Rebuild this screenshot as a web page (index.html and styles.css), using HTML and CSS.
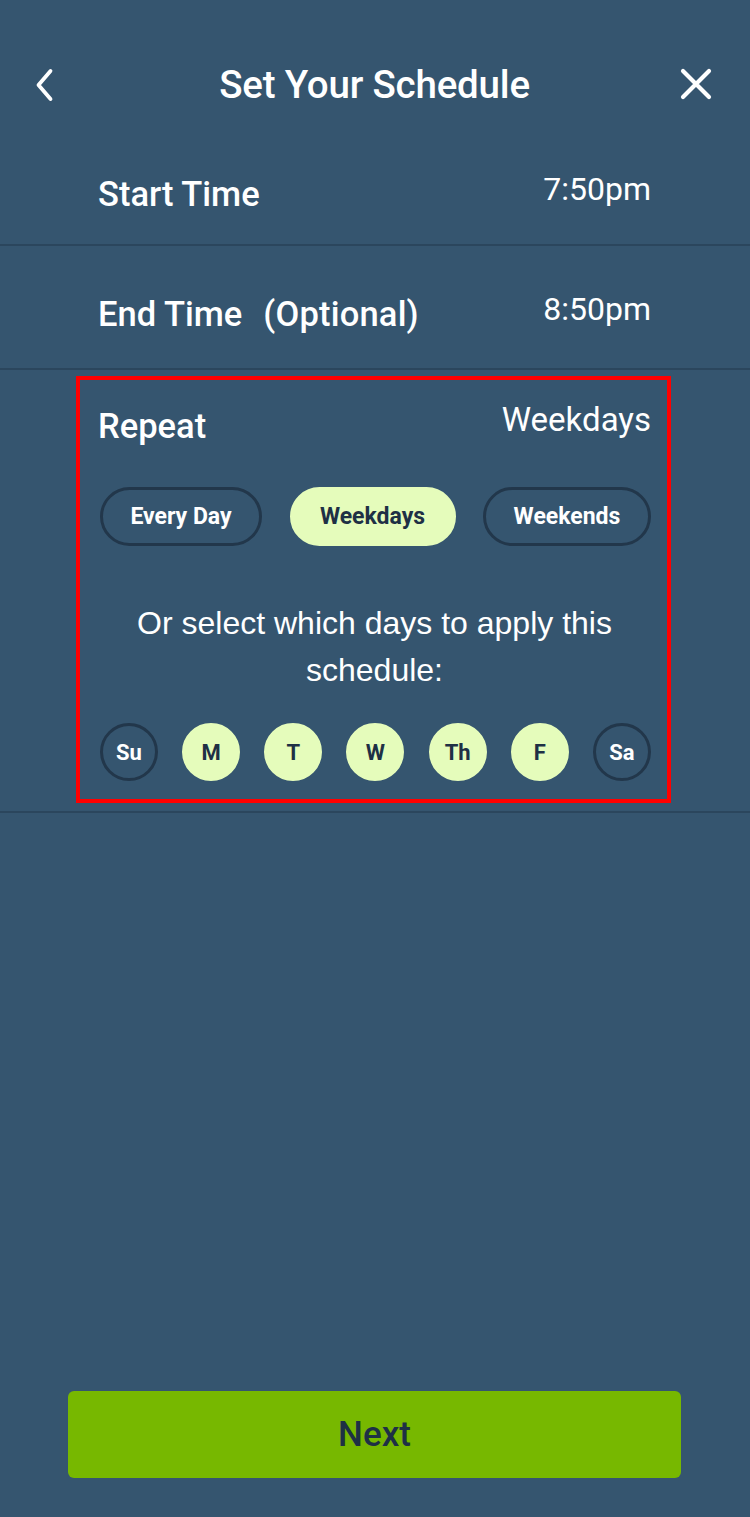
FILE: index.html
```html
<!DOCTYPE html>
<html>
<head>
<meta charset="utf-8">
<link rel="stylesheet" href="styles.css">
</head>
<body>
<div class="screen">
  <header class="topbar">
    <button class="icon-btn back" aria-label="Back">
      <svg width="22" height="34" viewBox="0 0 22 34"><path d="M16.5 3 L4.5 17 L16.5 31" fill="none" stroke="#fff" stroke-width="3.8" stroke-linecap="round" stroke-linejoin="round"/></svg>
    </button>
    <h1 class="title">Set Your Schedule</h1>
    <button class="icon-btn close" aria-label="Close">
      <svg width="34" height="34" viewBox="0 0 34 34"><path d="M4 4 L30 30 M30 4 L4 30" fill="none" stroke="#fff" stroke-width="4.2" stroke-linecap="round"/></svg>
    </button>
  </header>

  <div class="row row-start">
    <span class="label">Start Time</span>
    <span class="value">7:50pm</span>
  </div>
  <div class="row row-end">
    <span class="label">End Time<span class="opt">(Optional)</span></span>
    <span class="value">8:50pm</span>
  </div>

  <section class="repeat">
    <div class="repeat-box">
      <div class="repeat-head">
        <span class="label">Repeat</span>
        <span class="value">Weekdays</span>
      </div>
      <div class="pills">
        <span class="pill">Every Day</span>
        <span class="pill on">Weekdays</span>
        <span class="pill">Weekends</span>
      </div>
      <p class="hint">Or select which days to apply this schedule:</p>
      <div class="days">
        <span class="day">Su</span>
        <span class="day on">M</span>
        <span class="day on">T</span>
        <span class="day on">W</span>
        <span class="day on">Th</span>
        <span class="day on">F</span>
        <span class="day">Sa</span>
      </div>
    </div>
  </section>

  <div class="spacer"></div>

  <footer class="footer">
    <button class="next">Next</button>
  </footer>
</div>
</body>
</html>
```

FILE: styles.css
```css
* { box-sizing: border-box; }
html, body { margin: 0; padding: 0; }
body {
  background: #35556f;
  font-family: Roboto, "Liberation Sans", sans-serif;
  color: #fff;
}
.screen {
  width: 750px;
  height: 1517px;
  display: flex;
  flex-direction: column;
}
.topbar {
  height: 168px;
  display: grid;
  grid-template-columns: 1fr auto 1fr;
  align-items: start;
  padding: 66px 36px 0 35px;
}
.icon-btn {
  background: none;
  border: 0;
  padding: 0;
  display: flex;
}
.back { margin-top: 2px; margin-left: -1px; justify-self: start; }
.close { margin-top: 1px; margin-right: 1px; justify-self: end; }
.title {
  margin: 0;
  font-size: 38.5px;
  font-weight: 500;
  line-height: 36px;
  margin-top: 1px;
  letter-spacing: -0.2px;
}
.row {
  display: flex;
  justify-content: space-between;
  align-items: flex-start;
  padding: 0 99px 0 98px;
  border-bottom: 2px solid #2b465d;
}
.row-start { height: 78px; padding-top: 8px; }
.row-end { height: 124px; padding-top: 50px; }
.label {
  font-size: 34.5px;
  font-weight: 500;
  line-height: 36px;
}
.opt {
  margin-left: 21px;
  letter-spacing: 0.2px;
}
.value {
  font-family: Roboto, "Liberation Sans", sans-serif;
  font-size: 32px;
  font-weight: 400;
  line-height: 36px;
  margin-top: -5px;
}
.repeat {
  padding: 6px 0 8px 76px;
  border-bottom: 2px solid #2b465d;
}
.repeat-box {
  width: 595px;
  height: 427px;
  border: 4px solid #ff0000;
  padding: 28px 16px 0 18px;
}
.repeat-head {
  display: flex;
  justify-content: space-between;
  align-items: flex-start;
}
.repeat-head .value { margin-top: -6px; font-size: 33px; }
.pills {
  display: flex;
  justify-content: space-between;
  margin-top: 43px;
  padding: 0 0 0 2px;
}
.pill {
  height: 59px;
  border: 3px solid #22374b;
  border-radius: 30px;
  display: flex;
  align-items: center;
  justify-content: center;
  font-size: 23px;
  font-weight: 700;
}
.pill:nth-child(1) { width: 162px; }
.pill:nth-child(2) { width: 166px; }
.pill:nth-child(3) { width: 168px; }
.pill.on {
  background: #e5fcbb;
  border-color: #e5fcbb;
  color: #1e3045;
}
.hint {
  margin: 54px 0 0;
  text-align: center;
  font-family: "Liberation Sans", Arial, sans-serif;
  font-size: 32px;
  line-height: 47px;
  padding: 0 20px;
}
.days {
  display: flex;
  justify-content: space-between;
  margin-top: 29px;
  padding: 0 0 0 2px;
}
.day {
  width: 58px;
  height: 58px;
  border-radius: 50%;
  border: 3px solid #22374b;
  display: flex;
  align-items: center;
  justify-content: center;
  font-size: 22px;
  font-weight: 700;
}
.day.on {
  background: #e5fcbb;
  border-color: #e5fcbb;
  color: #1e3045;
}
.spacer { flex: 1; }
.footer {
  padding: 0 69px 39px 68px;
}
.next {
  width: 100%;
  height: 87px;
  background: #77b800;
  border: 0;
  border-radius: 6px;
  font-family: Roboto, sans-serif;
  font-size: 35px;
  font-weight: 500;
  color: #1e3045;
}
```
